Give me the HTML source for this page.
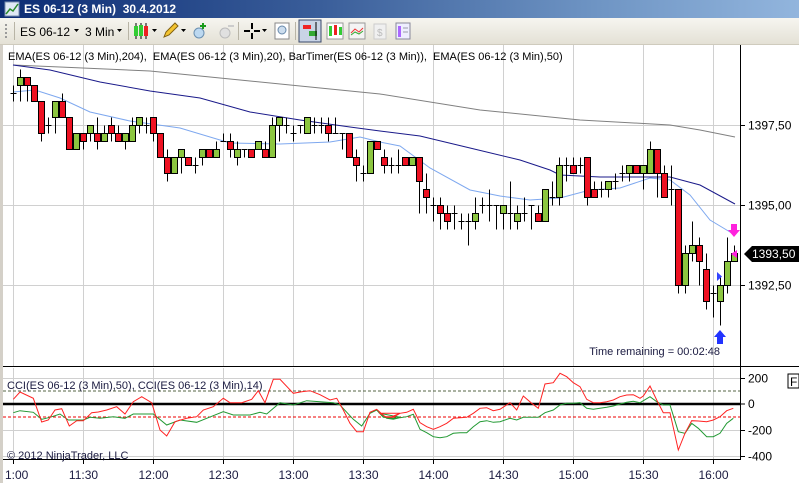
<!DOCTYPE html>
<html><head><meta charset="utf-8"><style>
body{margin:0;width:799px;height:483px;overflow:hidden;background:#fff;font-family:"Liberation Sans",sans-serif;}
#title{position:absolute;left:0;top:0;width:799px;height:18px;background:linear-gradient(90deg,#0c2c74 0%,#3a5e9a 40%,#6f95c4 75%,#92b5dd 100%);color:#fff;font-weight:bold;font-size:12px;}
#tb{position:absolute;left:0;top:18px;width:799px;height:26px;background:linear-gradient(#f6f5f0,#e4e1d6);border-bottom:1px solid #cfcbbd;font-size:12px;color:#000;}
.t{position:absolute;white-space:nowrap}
svg{position:absolute;left:0;top:0}
</style></head><body>
<div id="title"><svg width="18" height="18" style="left:4px;top:1px"><rect x="1" y="1" width="14" height="14" fill="#dfe8f5" stroke="#7a8fb0"/><polyline points="2,13 6,8 9,10 14,3" fill="none" stroke="#2a8a2a" stroke-width="1.5"/></svg><span class="t" style="left:24px;top:2px">ES 06-12 (3 Min)&nbsp; 30.4.2012</span></div>
<div id="tb">
<svg width="799" height="26">
<g fill="#9a9a9a"><rect x="5" y="6" width="2" height="2"/><rect x="5" y="10" width="2" height="2"/><rect x="5" y="14" width="2" height="2"/><rect x="5" y="18" width="2" height="2"/></g>
<line x1="14.5" y1="4" x2="14.5" y2="22" stroke="#b8b4a6"/>
<path d="M74 11h5l-2.5 3z M117 11h5l-2.5 3z M152 11h5l-2.5 3z M181 11h5l-2.5 3z M262 11h5l-2.5 3z" fill="#000"/>
<line x1="128.5" y1="4" x2="128.5" y2="22" stroke="#b8b4a6"/>
<line x1="238.5" y1="4" x2="238.5" y2="22" stroke="#b8b4a6"/>
<line x1="295.5" y1="4" x2="295.5" y2="22" stroke="#b8b4a6"/>
<g stroke="#000"><line x1="136" y1="5" x2="136" y2="21"/><line x1="141" y1="5" x2="141" y2="21"/><line x1="146" y1="5" x2="146" y2="21"/></g>
<rect x="134" y="8" width="4" height="10" fill="#3c3"/><rect x="139" y="7" width="4" height="11" fill="#3c3"/><rect x="144" y="8" width="4" height="10" fill="#e22"/>
<path d="M164 19l2-5 9-9 3 3-9 9z" fill="#f4c430" stroke="#806010"/>
<circle cx="199" cy="15" r="5" fill="#bcd8f0" stroke="#6a8fb0"/><path d="M203 5v6M200 8h6" stroke="#1a9a1a" stroke-width="2"/>
<circle cx="225" cy="15" r="5" fill="#e0e0e0" stroke="#bbb"/><path d="M228 8h6" stroke="#ccc" stroke-width="2"/>
<path d="M244 13h6M254 13h6M252 5v6M252 15v6" stroke="#000" stroke-width="2"/>
<rect x="275" y="5" width="14" height="16" fill="#fff" stroke="#888"/><circle cx="282" cy="12" r="4" fill="#cde" stroke="#68a"/>
<rect x="299" y="2" width="22" height="22" fill="#c9d4e6" stroke="#3a4a6a"/>
<rect x="303" y="7" width="8" height="4" fill="#e22"/><rect x="309" y="13" width="8" height="5" fill="#3a3"/><line x1="316" y1="4" x2="316" y2="22" stroke="#000"/>
<rect x="327" y="5" width="16" height="16" fill="#fff" stroke="#999"/><rect x="329" y="8" width="3" height="10" fill="#3c3"/><rect x="334" y="7" width="3" height="10" fill="#e22"/><rect x="339" y="9" width="3" height="8" fill="#3c3"/>
<rect x="349" y="5" width="16" height="16" fill="#f4f4f4" stroke="#999"/><polyline points="351,15 355,11 359,14 363,10" fill="none" stroke="#e33"/><polyline points="351,17 355,14 359,16 363,13" fill="none" stroke="#3a3"/>
<rect x="374" y="6" width="12" height="15" fill="#f0f0f0" stroke="#ccc"/><text x="377" y="18" font-size="10" fill="#bbb" font-family="Liberation Sans">$</text>
<rect x="396" y="5" width="14" height="16" fill="#eef" stroke="#889"/><rect x="398" y="8" width="3" height="11" fill="#a6f"/><line x1="403" y1="10" x2="408" y2="10" stroke="#99a"/><line x1="403" y1="14" x2="408" y2="14" stroke="#99a"/>
<text x="20" y="18" font-size="12" font-family="Liberation Sans">ES 06-12</text>
<text x="85" y="18" font-size="12" font-family="Liberation Sans">3 Min</text>
</svg></div>
<svg id="ch" width="799" height="483" style="top:0">
</svg>
<script>
var s='';
function L(x1,y1,x2,y2,c,w,d){s+='<line x1="'+x1+'" y1="'+y1+'" x2="'+x2+'" y2="'+y2+'" stroke="'+c+'" stroke-width="'+(w||1)+'"'+(d?' stroke-dasharray="'+d+'"':'')+'/>';}
function T(x,y,t,a,c){s+='<text x="'+x+'" y="'+y+'" font-size="12" font-family="Liberation Sans" fill="'+(c||'#000')+'"'+(a?' text-anchor="'+a+'"':'')+'>'+t+'</text>';}
function P(pts,c,w){s+='<polyline points="'+pts+'" fill="none" stroke="'+c+'" stroke-width="'+(w||1)+'"/>';}
// left border
s+='<rect x="0" y="45" width="3" height="438" fill="#d4d0c8"/>';
// vertical grid
for(var i=0;i<11;i++){var x=13.5+70*i;L(x,45,x,366,'#d0d0d0');L(x,368,x,459,'#d0d0d0');}
[125.5,205.5,285.5].forEach(function(y){L(3,y,740,y,'#d0d0d0');});
[378.5,430.5,456.5].forEach(function(y){L(3,y,740,y,'#d0d0d0');});
// EMAs
P('13,65 60,67 150,71 250,81 380,94 480,110 580,120 670,125 700,130 735,137','#808080');
P('13,65 50,70 100,82 150,91 200,98 250,112 300,120 350,127 380,131 420,136 470,148 520,160 550,170 560,175 600,177 650,177 670,177 700,185 735,204','#1a1a8a');
P('13,92 35,90 60,98 90,112 130,121 180,128 230,143 280,144 330,142 360,137 380,142 400,146 430,168 470,190 500,196 530,200 560,198 590,190 620,188 650,178 670,180 690,195 710,220 735,235','#7ea8ef');
// candles [o,c,h,l] in ticks (y=125.5+8t)
var B=[[-4,-4,-5,-3],[-5,-6,-7,-3],[-6,-5,-6,-3],[-5,-3,-5,-3],[-3,1,-3,2],[0,0,-1,1],[-1,-3,-3,1],[-3,-1,-4,-1],[-1,3,-1,3],[3,1,1,3],[1,2,1,3],[1,0,0,2],[1,2,-1,3],[2,1,0,2],[0,1,-1,2],[1,2,0,2],[2,1,1,3],[2,0,-1,2],[0,-1,-1,1],[0,0,-1,1],[-1,1,-1,2],[1,4,1,4],[4,6,3,7],[6,4,4,6],[4,3,3,6],[4,5,4,5],[5,5,4,6],[4,3,3,5],[3,4,3,4],[4,3,2,4],[2,2,1,2],[2,3,1,4],[4,3,2,5],[3,3,3,4],[3,4,3,4],[3,2,2,3],[3,4,2,4],[4,0,-1,4],[0,-1,-1,2],[0,0,-1,1],[1,1,0,2],[0,0,0,1],[1,-1,-1,1],[0,0,-1,1],[0,0,-1,1],[0,1,-1,2],[1,1,-1,1],[1,1,1,3],[1,4,1,4],[4,5,3,7],[6,6,5,7],[6,2,2,6],[2,3,2,3],[4,5,3,6],[5,5,4,6],[5,5,3,6],[4,5,4,5],[5,4,4,5],[4,7,4,11],[8,9,6,11],[10,10,9,12],[10,11,9,13],[11,12,10,13],[11,11,10,13],[12,12,11,13],[12,12,11,15],[12,11,9,13],[10,10,9,11],[10,10,8,12],[10,10,10,13],[11,10,10,13],[11,11,7,13],[12,11,10,13],[11,11,9,12],[10,10,10,13],[11,12,10,12],[12,8,8,12],[9,9,7,10],[9,5,4,10],[5,5,4,7],[5,6,4,6],[5,5,4,6],[4,9,4,10],[8,9,7,9],[8,8,7,9],[8,7,7,9],[7,7,6,8],[6,6,5,7],[6,5,5,7],[5,6,5,6],[6,5,5,8],[6,3,2,6],[3,6,3,9],[6,9,5,9],[8,8,5,10],[8,20,8,21],[20,16,15,21],[16,15,12,17],[15,17,14,20],[18,22,16,23],[21,21,20,24],[22,20,19,25],[20,17,14,21],[17,16,15,17]];
B.forEach(function(b,i){var x=13+7*i+.5,Y=function(t){return 125.5+8*t;};
 L(x,Y(b[2]),x,Y(b[3]),'#000');
 if(b[0]==b[1]){L(x-3,Y(b[0]),x+3,Y(b[0]),'#000');}
 else{var top=Math.min(b[0],b[1]),bot=Math.max(b[0],b[1]);s+='<rect x="'+(x-3)+'" y="'+Y(top)+'" width="6" height="'+(8*(bot-top))+'" fill="'+(b[1]<b[0]?'#8cc640':'#ee1122')+'" stroke="#000"/>';}
});
// markers
s+='<path d="M731 224h6v6h3l-6 7-6-7h3z" fill="#ff22dd"/>';
s+='<path d="M737 250v8l-6-4z" fill="#ff22dd"/>';
s+='<path d="M717 272v9l5-4.5z" fill="#3344ff"/>';
s+='<path d="M720 330l-6 7h3v7h6v-7h3z" fill="#2233ff"/>';
T(8,60,'EMA(ES 06-12 (3 Min),204),&#160; EMA(ES 06-12 (3 Min),20), BarTimer(ES 06-12 (3 Min)), &#160;EMA(ES 06-12 (3 Min),50)');
s=s.replace(/<text x="8" y="60" font-size="12"/,'<text x="8" y="60" font-size="11"');
s+='<text x="720" y="355" font-size="11" font-family="Liberation Sans" fill="#1a1a40" text-anchor="end">Time remaining = 00:02:48</text>';
// right axis
L(740.5,45,740.5,460,'#000');
[[125.5,'1397,50'],[205.5,'1395,00'],[285.5,'1392,50']].forEach(function(a){L(741,a[0],745,a[0],'#000');T(748,a[0]+4,a[1]);});
s+='<path d="M744 254l8-8h47v16h-47z" fill="#000"/>';T(752,258,'1393,50','','#fff');
// indicator panel
L(3,366.5,799,366.5,'#000');L(3,459.5,741,459.5,'#000');
L(3,391,740,391,'#556644',1,'3,2');L(3,417,740,417,'#ee0000',1,'3,2');L(3,404,740,404,'#000',2.5);
[[378.5,'200'],[404,'0'],[430.5,'-200'],[456.5,'-400']].forEach(function(a){L(741,a[0],745,a[0],'#000');T(748,a[0]+4,a[1]);});
s+='<rect x="788" y="374" width="11" height="14" fill="#fff" stroke="#000"/>';T(790,386,'F');
function Z(arr,ox){return arr.map(function(p){return (ox+p[0]/3).toFixed(1)+','+(360+p[1]/3).toFixed(1);}).join(' ');}
var g5=[[40,158],[60,152],[100,157],[125,178],[150,172],[180,162],[205,180],[250,180],[270,172],[300,175],[340,170],[375,175],[400,162],[460,162],[500,195],[540,180],[590,187],[620,175],[670,155],[700,165],[750,165],[780,157],[800,162],[840,128],[880,135],[920,122],[960,125],[1000,128],[1020,135],[1060,178],[1085,198],[1110,160],[1130,150],[1150,172],[1180,175],[1200,172]];
var r5=[[40,118],[60,96],[100,115],[125,186],[145,180],[165,150],[185,146],[208,198],[230,182],[250,182],[275,158],[295,156],[320,150],[350,140],[375,162],[400,125],[425,110],[455,128],[480,210],[500,228],[525,185],[560,175],[590,170],[610,150],[640,140],[670,115],[690,128],[725,128],[755,118],[775,92],[795,128],[820,58],[840,58],[880,100],[905,95],[930,92],[960,104],[990,120],[1010,115],[1030,150],[1050,190],[1070,215],[1090,215],[1110,157],[1130,148],[1155,170],[1175,170],[1200,160]];
var g6=[[0,160],[20,175],[40,178],[60,173],[80,170],[100,163],[120,208],[140,218],[160,230],[180,233],[200,230],[220,220],[240,218],[260,218],[280,200],[300,185],[320,182],[340,187],[360,185],[390,175],[410,180],[430,172],[450,172],[475,172],[495,158],[520,150],[540,135],[560,130],[580,130],[600,128],[620,145],[640,148],[660,145],[680,142],[700,138],[720,132],[740,127],[760,124],[780,128],[810,110],[830,125],[850,135],[870,135],[895,215],[915,220],[935,190],[955,205],[980,230],[1000,230],[1020,220],[1040,190],[1060,175]];
var r6=[[0,160],[20,172],[40,172],[60,160],[80,157],[100,148],[120,188],[140,200],[160,208],[180,200],[200,190],[220,175],[240,173],[260,172],[280,160],[300,145],[320,143],[340,152],[360,148],[390,128],[410,150],[430,108],[455,130],[475,145],[495,72],[520,68],[540,40],[560,50],[580,68],[600,80],[620,118],[640,128],[660,128],[680,125],[700,120],[720,110],[740,105],[760,104],[780,115],[790,108],[810,78],[830,120],[850,158],[870,158],[895,270],[915,220],[935,182],[955,183],[980,185],[1000,180],[1020,170],[1040,152],[1060,145]];
P(Z(g5,0)+' '+Z(g6,380),'#229933');
P(Z(r5,0)+' '+Z(r6,380),'#ff2222');
s+='<text x="7" y="389" font-size="11" font-family="Liberation Sans" fill="#1a1a40">CCI(ES 06-12 (3 Min),50), CCI(ES 06-12 (3 Min),14)</text>';
s+='<text x="7" y="459" font-size="11" font-family="Liberation Sans" fill="#1a1a40">© 2012 NinjaTrader, LLC</text>';
// time axis
var tl=['1:00','11:30','12:00','12:30','13:00','13:30','14:00','14:30','15:00','15:30','16:00'];
tl.forEach(function(t,i){var x=13.5+70*i;L(x,460,x,464,'#000');s+='<text x="'+(i==0?5:x)+'" y="479" font-size="12" font-family="Liberation Sans" fill="#1a1a40"'+(i==0?'':' text-anchor="middle"')+'>'+t+'</text>';});
document.getElementById('ch').innerHTML=s;
</script>
</body></html>
